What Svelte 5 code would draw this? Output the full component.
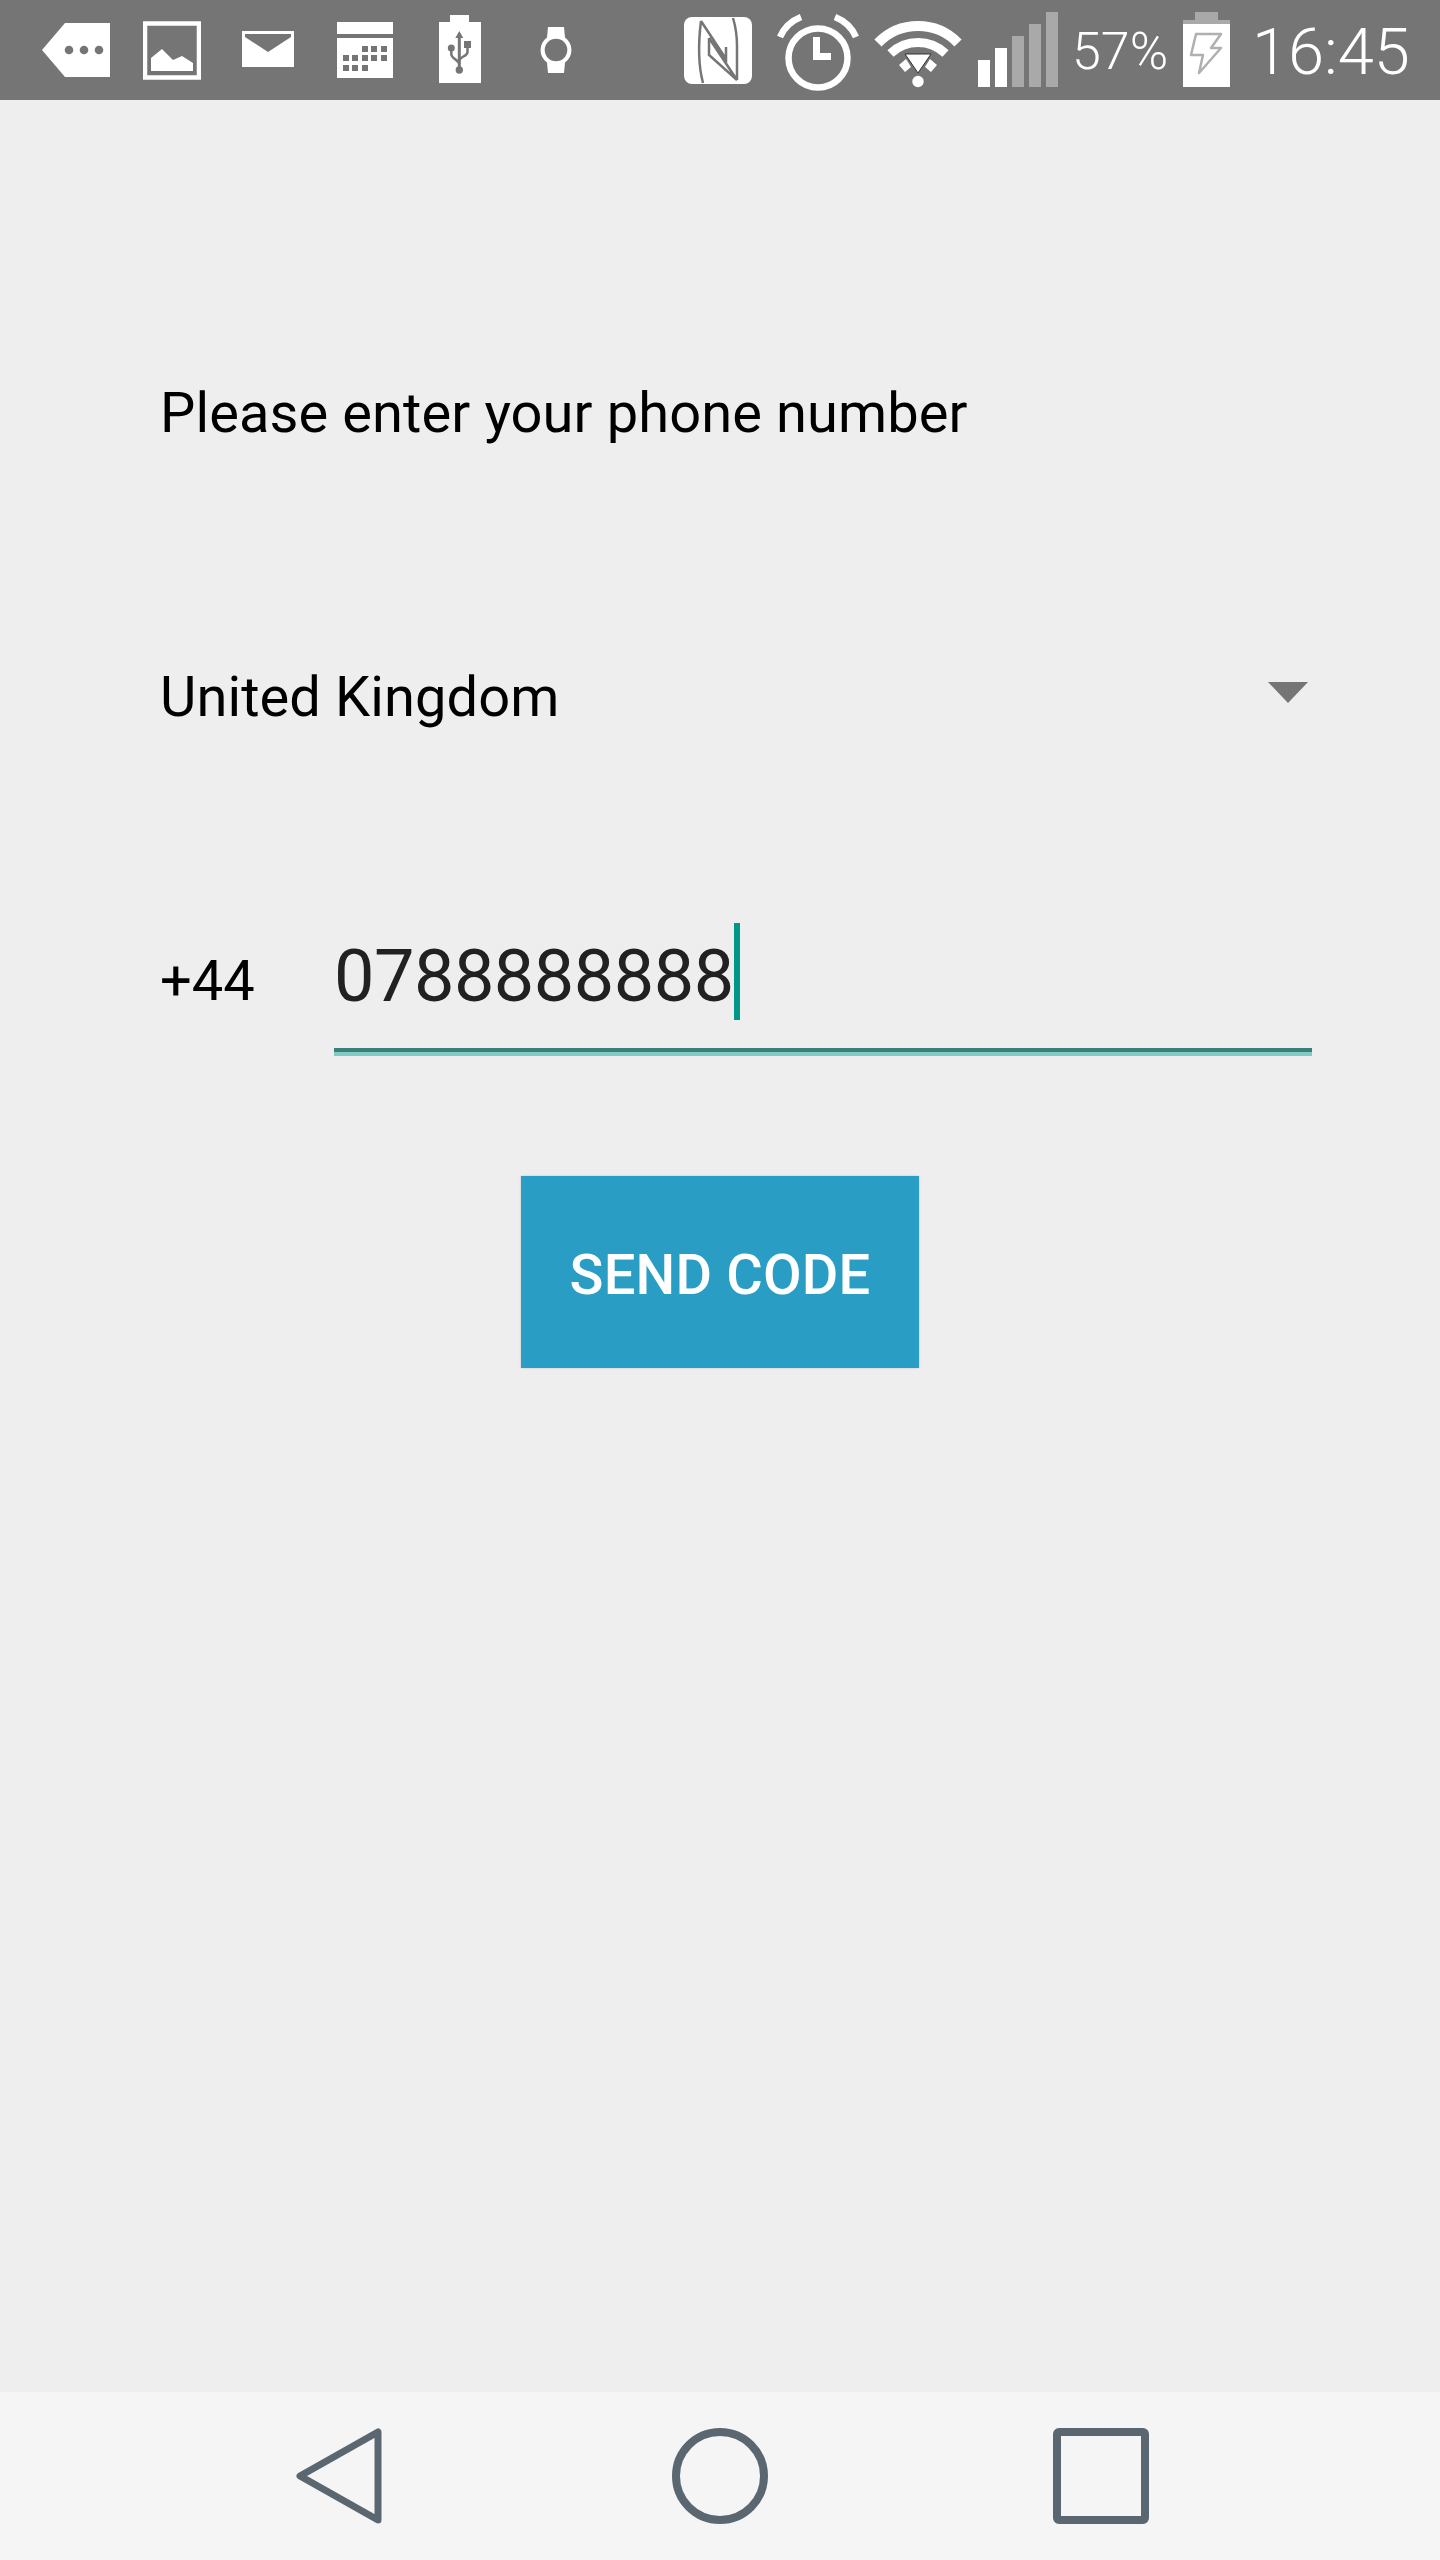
<script>
  const bars = [
    { h: 27, on: true },
    { h: 39, on: true },
    { h: 51, on: false },
    { h: 63, on: false },
    { h: 75, on: false }
  ];
</script>

<div class="screen">
  <header class="status">
    <svg class="ic tag" viewBox="42 0 68 100"><path d="M65 23H110V77H65L42 50Z" fill="#fff"/><g fill="#757575"><circle cx="69" cy="50" r="4.3"/><circle cx="84" cy="50" r="4.3"/><circle cx="99" cy="50" r="4.3"/></g></svg>
    <svg class="ic pic" viewBox="143 0 58 100"><rect x="145" y="23.5" width="54" height="54" fill="none" stroke="#fff" stroke-width="4.5"/><path d="M151 58L162 49L173 60L182 56L193 63V71H151Z" fill="#fff"/></svg>
    <svg class="ic mail" viewBox="242 0 52 100"><rect x="242" y="31" width="52" height="36" fill="#fff"/><path d="M245 34H291V37L268 52L245 37Z" fill="#757575"/></svg>
    <svg class="ic cal" viewBox="337 0 56 100"><rect x="337" y="22" width="56" height="12" fill="#fff"/><rect x="337" y="38" width="56" height="40" fill="#fff"/><g fill="#757575"><path d="M362 46h6v6h-6zM371 46h6v6h-6zM381 46h6v6h-6zM343 55h6v6h-6zM352 55h6v6h-6zM362 55h6v6h-6zM371 55h6v6h-6zM381 55h6v6h-6zM343 65h6v6h-6zM352 65h6v6h-6zM362 65h6v6h-6z"/></g></svg>
    <svg class="ic usb" viewBox="439 0 42 100"><path d="M450 15H469V22H481V83H439V22H450Z" fill="#fff"/><g fill="#757575"><path d="M459.300 31L463.300 38H460.800V68H457.800V38H455.300Z"/><circle cx="459.300" cy="70" r="3.700"/><circle cx="451.300" cy="48" r="3.500"/><rect x="464" y="41" width="7" height="7"/></g><path d="M451.300 50V54C451.300 59 459.300 60 459.300 64M467.500 47V52C467.500 57 459.300 56 459.300 61" fill="none" stroke="#757575" stroke-width="2.500"/></svg>
    <svg class="ic watch" viewBox="540 0 32 100"><path d="M548 27H564L565 37.400A15.500 15.500 0 0 1 565 62.600L564 73H548L547 62.600A15.500 15.500 0 0 1 547 37.400Z" fill="#fff"/><circle cx="556" cy="50" r="11.300" fill="#757575"/></svg>
    <svg class="ic nfc" viewBox="684 0 68 100"><rect x="684" y="17" width="68" height="67" rx="8" fill="#fff"/><path d="M701 21C698 45 699 68 703 83M701 21L726 59V47M709 38V55L737 80L709 38M733 18C736 28 737 36 737 46V80" fill="none" stroke="#757575" stroke-width="2.500"/></svg>
    <svg class="ic alarm" viewBox="776 0 84 100"><circle cx="818" cy="58" r="29.500" fill="none" stroke="#fff" stroke-width="6.500"/><path d="M813 37H820V53H831V60H813Z" fill="#fff"/><path d="M780 37Q786 23 801 17M856 37Q850 23 835 17" fill="none" stroke="#fff" stroke-width="6.500"/></svg>
    <svg class="ic wifi" viewBox="874 0 90 100"><path d="M878 43A55.600 55.600 0 0 1 958 43" fill="none" stroke="#fff" stroke-width="10"/><path d="M890.500 53.500A39.900 39.900 0 0 1 945.500 53.500" fill="none" stroke="#fff" stroke-width="9"/><path d="M905 54H931L918 73Z" fill="#fff" stroke="#333" stroke-width="1"/><path d="M899 65L906 59L911 67L905 72ZM937 65L930 59L925 67L931 72Z" fill="#fff"/><circle cx="918" cy="81.500" r="5.700" fill="#fff"/></svg>
    <div class="signal">
      {#each bars as b}
        <span class="bar" class:on={b.on} style="height:{b.h}px"></span>
      {/each}
    </div>
    <span class="pct">57%</span>
    <svg class="ic batt" viewBox="1185 0 47 100"><path d="M1197 12H1220V20H1232V24H1185V20H1197Z" fill="#a9a9a9"/><rect x="1185" y="24" width="47" height="63" fill="#fff"/><path d="M1198 34H1223L1213 48H1223L1201 73L1205 55H1193Z" fill="none" stroke="#b0b0b0" stroke-width="2.500" stroke-linejoin="round"/></svg>
    <span class="clock">16:45</span>
  </header>

  <main class="content">
    <p class="title">Please enter your phone number</p>
    <div class="country">
      <span>United Kingdom</span>
      <svg class="caret" viewBox="0 0 40 21"><path d="M0 0H40L20 21Z" fill="#757575"/></svg>
    </div>
    <div class="phone">
      <span class="code">+44</span>
      <div class="field"><span class="number">0788888888</span><span class="cursor"></span></div>
    </div>
    <button class="send">SEND CODE</button>
  </main>

  <footer class="nav">
    <svg viewBox="0 0 88 96"><path d="M4 48L82 4V92Z" fill="none" stroke="#5b6770" stroke-width="7" stroke-linejoin="round"/></svg>
    <svg viewBox="0 0 96 96"><circle cx="48" cy="48" r="44" fill="none" stroke="#5b6770" stroke-width="8"/></svg>
    <svg viewBox="0 0 96 96"><rect x="4" y="4" width="88" height="88" rx="2" fill="none" stroke="#5b6770" stroke-width="8"/></svg>
  </footer>
</div>

<style>
  :global(body) { margin: 0; background: #eeeeee; }
  .screen { width: 1440px; height: 2560px; display: flex; flex-direction: column; font-family: Roboto, sans-serif; background: #eeeeee; color: #000; }
  .status { height: 100px; flex: none; background: #757575; display: flex; align-items: center; color: #fff; }
  .ic { height: 100px; flex: none; display: block; }
  .tag { width: 68px; margin-left: 42px; }
  .pic { width: 58px; margin-left: 33px; }
  .mail { width: 52px; margin-left: 41px; }
  .cal { width: 56px; margin-left: 43px; }
  .usb { width: 42px; margin-left: 46px; }
  .watch { width: 32px; margin-left: 59px; }
  .nfc { width: 68px; margin-left: 112px; }
  .alarm { width: 84px; margin-left: 24px; }
  .wifi { width: 90px; margin-left: 14px; }
  .signal { margin-left: 14px; width: 80px; height: 100px; display: flex; align-items: flex-end; gap: 5px; padding-bottom: 13px; box-sizing: border-box; }
  .bar { width: 12px; background: #a9a9a9; }
  .bar.on { background: #fff; }
  .pct { font-size: 52px; font-weight: 350; margin-left: 14px; width: 97px; line-height: 100px; position: relative; top: 2px; }
  .batt { width: 47px; margin-left: 14px; }
  .clock { font-size: 65px; font-weight: 350; margin-left: 22px; line-height: 100px; position: relative; top: 2px; }

  .content { flex: 1; display: flex; flex-direction: column; padding: 0 128px 0 160px; }
  .title { margin: 280px 0 0; font-size: 56px; line-height: 66px; letter-spacing: 0.1px; }
  .country { margin-top: 218px; display: flex; justify-content: space-between; align-items: center; font-size: 56px; line-height: 66px; letter-spacing: 0.1px; padding-right: 4px; }
  .caret { width: 40px; height: 21px; display: block; margin-bottom: 10px; }
  .phone { margin-top: 193px; display: flex; align-items: flex-start; }
  .code { width: 174px; font-size: 56px; line-height: 66px; margin-top: 25px; }
  .field { flex: 1; height: 133px; box-sizing: border-box; display: flex; align-items: flex-start; border-bottom: 4px solid #80cbc4; box-shadow: inset 0 -4px 0 #3b7f76; }
  .number { font-size: 72px; line-height: 84px; color: #212121; margin-top: 12px; letter-spacing: -0.5px; }
  .cursor { width: 6px; height: 97px; background: #009688; }
  .send { align-self: center; margin-top: 120px; margin-right: 32px; width: 398px; height: 192px; border: none; padding: 5px 0 0; background: #2a9dc4; color: #fff; font-family: inherit; font-size: 56px; font-weight: 500; letter-spacing: 0.2px; box-shadow: 0 0 2px rgba(0, 0, 0, 0.18); }

  .nav { height: 168px; flex: none; background: #f5f5f5; display: flex; align-items: center; }
  .nav svg { height: 96px; display: block; flex: none; }
  .nav svg:nth-child(1) { width: 88px; margin-left: 296px; }
  .nav svg:nth-child(2) { width: 96px; margin-left: 288px; }
  .nav svg:nth-child(3) { width: 96px; margin-left: 285px; }
</style>
